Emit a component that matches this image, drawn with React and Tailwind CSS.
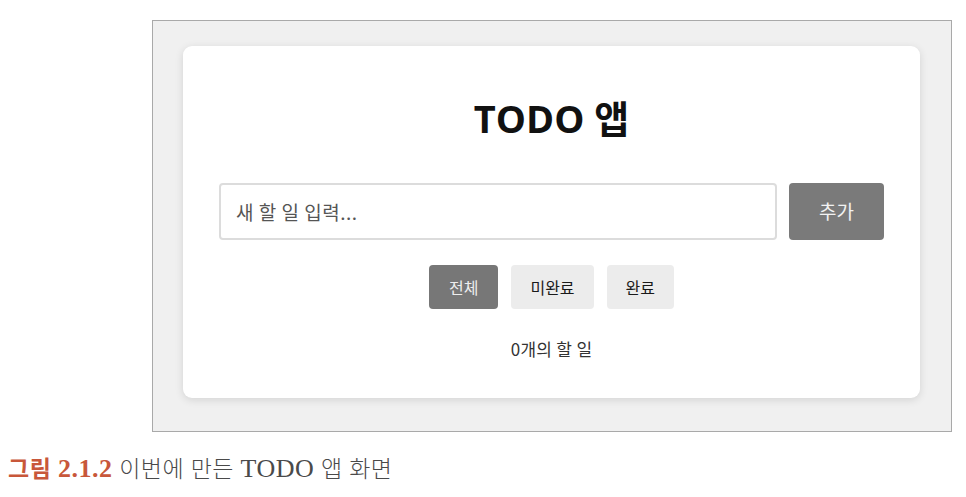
import React, { useState } from 'react';

const FILTERS = ['전체', '미완료', '완료'];

const App = () => {
  const [text, setText] = useState('');
  const [filter, setFilter] = useState('전체');
  const [todos, setTodos] = useState([]);

  const addTodo = () => {
    if (!text.trim()) return;
    setTodos([...todos, { id: Date.now(), text, done: false }]);
    setText('');
  };

  return (
    <div className="w-[966px] h-[497px] bg-white overflow-hidden" style={{ fontFamily: '"Noto Sans CJK KR", "Noto Sans", sans-serif' }}>
      <div className="pt-[20px] pl-[152px]">
        <div className="w-[800px] h-[412px] border border-[#a9a9a9] bg-[#f0f0f0] pl-[30px] pr-[31px] pt-[25px]">
          <div className="h-[352px] bg-white rounded-[9px] shadow-[0_2px_8px_rgba(0,0,0,0.12)] px-[36px] pt-[50px]">
            <h1 className="text-center text-[38px] leading-[44px] font-bold text-[#111]" style={{ fontFamily: '"Open Sans", "Noto Sans CJK KR", sans-serif' }}>TODO 앱</h1>
            <div className="flex gap-[12px] mt-[43px]">
              <input
                value={text}
                onChange={(e) => setText(e.target.value)}
                placeholder="새 할 일 입력..."
                className="flex-1 h-[57px] border-2 border-[#dcdcdc] rounded-[4px] px-[15px] text-[19px] tracking-[0.5px] text-[#333] placeholder:text-[#555] outline-none"
              />
              <button onClick={addTodo} className="w-[95px] h-[57px] rounded-[4px] bg-[#7a7a7a] text-[#f2f2f2] text-[19px]">
                추가
              </button>
            </div>
            <div className="flex justify-center gap-[13px] mt-[25px]">
              {FILTERS.map((f) => (
                <button
                  key={f}
                  onClick={() => setFilter(f)}
                  className={
                    f === filter
                      ? 'h-[44px] px-[20px] rounded-[4px] bg-[#777777] text-[#eeeeee] text-[16px]'
                      : 'h-[44px] px-[19px] rounded-[4px] bg-[#ececec] text-[#1a1a1a] text-[16px]'
                  }
                >
                  {f}
                </button>
              ))}
            </div>
            <p className="text-center text-[17px] leading-[22px] tracking-[0.3px] text-[#333] mt-[29px]">{todos.length}개의 할 일</p>
          </div>
        </div>
      </div>
      <div className="pl-[8px] pt-[20px] text-[23px] leading-[30px] tracking-[0.5px] [word-spacing:1px]">
        <span className="text-[#c8573a] font-bold">
          그림 <span className="text-[26px]" style={{ fontFamily: '"Liberation Serif", serif' }}>2.1.2</span>
        </span>
        <span className="text-[#4a4a4a] font-light"> 이번에 만든 <span className="text-[26px]" style={{ fontFamily: '"Liberation Serif", serif' }}>TODO</span> 앱 화면</span>
      </div>
    </div>
  );
};

export default App;
